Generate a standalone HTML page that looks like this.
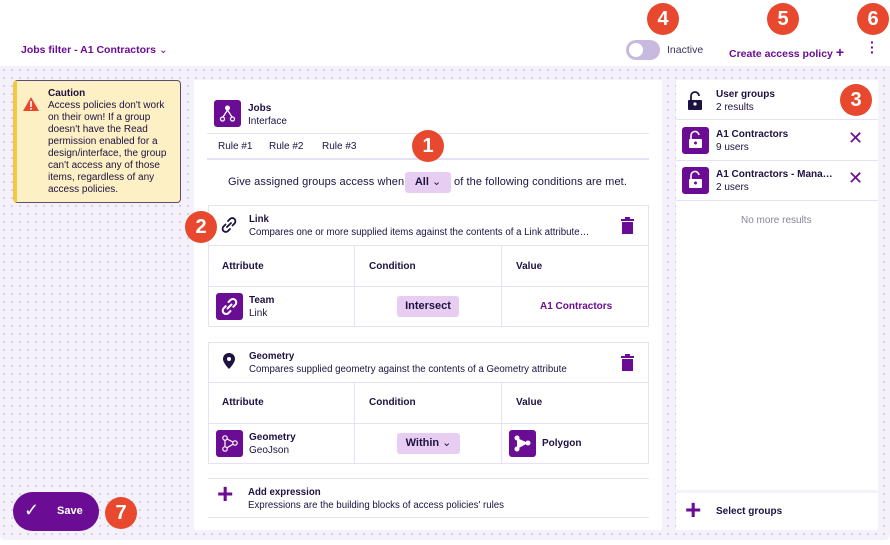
<!DOCTYPE html>
<html><head><meta charset="utf-8"><style>
*{box-sizing:border-box;margin:0;padding:0}
body{width:890px;height:545px;overflow:hidden;font-family:"Liberation Sans",sans-serif;color:#1d1240;background:#fff;position:relative;font-size:11px}
.abs{position:absolute}
.bg{left:0;top:66px;width:890px;height:474px;background-color:#f4f1fb;background-image:radial-gradient(#cfc6e6 0.8px,transparent 1px);background-size:8px 8px;border-radius:0 0 6px 6px}
.badge{position:absolute;width:32px;height:32px;border-radius:50%;background:#e8492e;color:#fff;font-weight:bold;font-size:20px;text-align:center;line-height:32px}
.b{font-weight:bold}
.purple{color:#6b0d94}
.sq{position:absolute;width:27px;height:27px;background:#6b0d94;border-radius:3px}
.card{position:absolute;border:1px solid #e6e1f5;background:#fff}
.cell{position:absolute;border-right:1px solid #e6e1f5}
.chip{position:absolute;background:#e8cdf3;border-radius:3px;font-weight:bold;font-size:11px;text-align:center;line-height:21px}
.hr{position:absolute;height:1px;background:#e6e1f5}
</style></head><body>
<div class="abs b purple" style="left:21px;top:44px;font-size:10.5px">Jobs filter - A1 Contractors <span style="font-weight:normal">&#8964;</span></div>
<div class="abs" style="left:626px;top:40px;width:34px;height:20px;border-radius:10px;background:#c8b9de"></div>
<div class="abs" style="left:629px;top:43px;width:14px;height:14px;border-radius:50%;background:#fff"></div>
<div class="abs" style="left:667px;top:44px;font-size:10.5px;color:#3a3358">Inactive</div>
<div class="abs b purple" style="left:729px;top:44px;font-size:10.5px">Create access policy <span style="font-size:14px">+</span></div>
<div class="abs b purple" style="left:870px;top:40px;font-size:14px;line-height:5px">·<br>·<br>·</div>
<div class="badge" style="left:647px;top:3px">4</div>
<div class="badge" style="left:767px;top:3px">5</div>
<div class="badge" style="left:857px;top:3px">6</div>

<div class="abs bg"></div>
<div class="abs" style="left:13px;top:80px;width:168px;height:123px;background:#fdf0c4;border:1px solid #5a4e70;border-left:4px solid #f5c842;border-radius:4px"></div>
<svg class="abs" style="left:22px;top:96px" width="18" height="16"><path d="M9 1L17 15H1Z" fill="#e8492e"/><rect x="8.2" y="5" width="1.6" height="6" fill="#fff"/><rect x="8.2" y="12" width="1.6" height="1.6" fill="#fff"/></svg>
<div class="abs" style="left:48px;top:88px;width:130px;font-size:10px;line-height:12px"><b>Caution</b><br>Access policies don't work on their own! If a group doesn't have the Read permission enabled for a design/interface, the group can't access any of those items, regardless of any access policies.</div>

<div class="abs" style="left:194px;top:80px;width:468px;height:450px;background:#fff"></div>
<div class="sq" style="left:214px;top:100px"></div>
<svg class="abs" style="left:214px;top:100px" width="27" height="27"><circle cx="13.5" cy="8" r="2.5" fill="#fff"/><path d="M13.5 10L9 17M13.5 10L18 17" stroke="#fff" stroke-width="1.3"/><circle cx="8.5" cy="19" r="2" fill="none" stroke="#fff" stroke-width="1.3"/><circle cx="18.5" cy="19" r="2" fill="none" stroke="#fff" stroke-width="1.3"/></svg>
<div class="abs" style="left:248px;top:102px;font-size:10px;line-height:13px"><b>Jobs</b><br>Interface</div>
<div class="hr" style="left:207px;top:133px;width:442px"></div>
<div class="abs" style="left:218px;top:141px;font-size:10px">Rule #1</div>
<div class="abs" style="left:269px;top:141px;font-size:10px">Rule #2</div>
<div class="abs" style="left:322px;top:141px;font-size:10px">Rule #3</div>
<div class="hr" style="left:207px;top:158px;width:442px;height:2px"></div>
<div class="badge" style="left:412px;top:130px">1</div>
<div class="abs" style="left:228px;top:176px;font-size:11px;letter-spacing:0.1px">Give assigned groups access when</div>
<div class="chip" style="left:405px;top:172px;width:46px">All <span style="font-weight:normal">&#8964;</span></div>
<div class="abs" style="left:454px;top:176px;font-size:11px;letter-spacing:0.1px">of the following conditions are met.</div>

<div class="card" style="left:208px;top:205px;width:441px;height:122px"></div>
<div class="hr" style="left:208px;top:245px;width:441px"></div>
<div class="hr" style="left:208px;top:286px;width:441px"></div>
<div class="cell" style="left:208px;top:245px;width:147px;height:82px"></div>
<div class="cell" style="left:355px;top:245px;width:147px;height:82px"></div>
<div class="badge" style="left:185px;top:211px">2</div>
<svg class="abs" style="left:220px;top:216px" width="18" height="18"><g fill="none" stroke="#1d1240" stroke-width="1.8" stroke-linecap="round"><path d="M8 5l2-2a3 3 0 0 1 4.5 4.5l-2 2"/><path d="M10 13l-2 2a3 3 0 0 1-4.5-4.5l2-2"/><path d="M7 11l4-4"/></g></svg>
<div class="abs" style="left:249px;top:213px;font-size:9.7px;line-height:13px"><b>Link</b><br>Compares one or more supplied items against the contents of a Link attribute…</div>
<svg class="abs" style="left:621px;top:217px" width="13" height="17"><rect x="0" y="2" width="13" height="2" fill="#6b0d94"/><rect x="4" y="0" width="5" height="2" fill="#6b0d94"/><rect x="1" y="5" width="11" height="12" fill="#6b0d94"/></svg>
<div class="abs b" style="left:222px;top:261px;font-size:10px">Attribute</div>
<div class="abs b" style="left:369px;top:261px;font-size:10px">Condition</div>
<div class="abs b" style="left:516px;top:261px;font-size:10px">Value</div>
<div class="sq" style="left:216px;top:293px"></div>
<svg class="abs" style="left:220px;top:297px" width="19" height="19"><g fill="none" stroke="#fff" stroke-width="2" stroke-linecap="round"><path d="M8.5 5l2-2a3.2 3.2 0 0 1 4.8 4.8l-2 2"/><path d="M10.5 14l-2 2a3.2 3.2 0 0 1-4.8-4.8l2-2"/><path d="M7.5 11.5l4-4"/></g></svg>
<div class="abs" style="left:249px;top:294px;font-size:10px;line-height:13px"><b>Team</b><br>Link</div>
<div class="chip" style="left:397px;top:296px;width:62px">Intersect</div>
<div class="abs b purple" style="left:540px;top:301px;font-size:10px">A1 Contractors</div>

<div class="card" style="left:208px;top:342px;width:441px;height:122px"></div>
<div class="hr" style="left:208px;top:382px;width:441px"></div>
<div class="hr" style="left:208px;top:423px;width:441px"></div>
<div class="cell" style="left:208px;top:382px;width:147px;height:82px"></div>
<div class="cell" style="left:355px;top:382px;width:147px;height:82px"></div>
<svg class="abs" style="left:222px;top:352px" width="14" height="18"><path d="M7 1C3.5 1 1 3.5 1 7c0 4 6 10 6 10s6-6 6-10c0-3.5-2.5-6-6-6z" fill="#1d1240"/><circle cx="7" cy="7" r="2" fill="#fff"/></svg>
<div class="abs" style="left:249px;top:350px;font-size:9.7px;line-height:13px"><b>Geometry</b><br>Compares supplied geometry against the contents of a Geometry attribute</div>
<svg class="abs" style="left:621px;top:354px" width="13" height="17"><rect x="0" y="2" width="13" height="2" fill="#6b0d94"/><rect x="4" y="0" width="5" height="2" fill="#6b0d94"/><rect x="1" y="5" width="11" height="12" fill="#6b0d94"/></svg>
<div class="abs b" style="left:222px;top:397px;font-size:10px">Attribute</div>
<div class="abs b" style="left:369px;top:397px;font-size:10px">Condition</div>
<div class="abs b" style="left:516px;top:397px;font-size:10px">Value</div>
<div class="sq" style="left:216px;top:430px"></div>
<svg class="abs" style="left:216px;top:430px" width="27" height="27"><path d="M9 8L9 19L19 13Z" fill="none" stroke="#fff" stroke-width="1.2"/><circle cx="9" cy="8" r="2.2" fill="#6b0d94" stroke="#fff" stroke-width="1.2"/><circle cx="9" cy="19" r="2.2" fill="#6b0d94" stroke="#fff" stroke-width="1.2"/><circle cx="19" cy="13" r="2.2" fill="#6b0d94" stroke="#fff" stroke-width="1.2"/></svg>
<div class="abs" style="left:249px;top:431px;font-size:10px;line-height:13px"><b>Geometry</b><br>GeoJson</div>
<div class="chip" style="left:397px;top:433px;width:63px">Within <span style="font-weight:normal">&#8964;</span></div>
<div class="sq" style="left:509px;top:430px"></div>
<svg class="abs" style="left:509px;top:430px" width="27" height="27"><path d="M8 8L8 19L19 13Z" fill="#fff"/><circle cx="8" cy="8" r="2.5" fill="#fff"/><circle cx="8" cy="19" r="2.5" fill="#fff"/><circle cx="19" cy="13" r="2.5" fill="#fff"/></svg>
<div class="abs b" style="left:542px;top:438px;font-size:10px">Polygon</div>

<div class="hr" style="left:208px;top:478px;width:441px"></div>
<div class="hr" style="left:208px;top:517px;width:441px"></div>
<div class="abs purple b" style="left:217px;top:478px;font-size:28px">+</div>
<div class="abs" style="left:248px;top:486px;font-size:9.7px;line-height:13px"><b>Add expression</b><br>Expressions are the building blocks of access policies' rules</div>

<div class="abs" style="left:676px;top:80px;width:202px;height:450px;background:#fff"></div>
<svg class="abs" style="left:687px;top:91px" width="16" height="20"><path d="M4 9V5a4 4 0 0 1 8 0" fill="none" stroke="#1d1240" stroke-width="1.8"/><rect x="1" y="9" width="14" height="10" rx="1" fill="#1d1240"/><circle cx="8" cy="13" r="1.6" fill="#fff"/></svg>
<div class="abs" style="left:716px;top:88px;font-size:10px;line-height:13px"><b>User groups</b><br>2 results</div>
<div class="badge" style="left:840px;top:84px">3</div>
<div class="hr" style="left:676px;top:119px;width:202px"></div>
<div class="sq" style="left:682px;top:127px"></div>
<svg class="abs" style="left:682px;top:127px" width="27" height="27"><path d="M9 12V9a4 4 0 0 1 8 -1" fill="none" stroke="#fff" stroke-width="1.6"/><rect x="7" y="12" width="13" height="9" rx="1" fill="#fff"/><circle cx="13.5" cy="16" r="1.5" fill="#6b0d94"/></svg>
<div class="abs" style="left:716px;top:128px;font-size:10px;line-height:13px"><b>A1 Contractors</b><br>9 users</div>
<div class="abs" style="left:848px;top:128px;font-size:18px;color:#6b0d94">✕</div>
<div class="hr" style="left:676px;top:160px;width:202px"></div>
<div class="sq" style="left:682px;top:167px"></div>
<svg class="abs" style="left:682px;top:167px" width="27" height="27"><path d="M9 12V9a4 4 0 0 1 8 -1" fill="none" stroke="#fff" stroke-width="1.6"/><rect x="7" y="12" width="13" height="9" rx="1" fill="#fff"/><circle cx="13.5" cy="16" r="1.5" fill="#6b0d94"/></svg>
<div class="abs" style="left:716px;top:168px;font-size:10px;line-height:13px"><b>A1 Contractors - Mana…</b><br>2 users</div>
<div class="abs" style="left:848px;top:168px;font-size:18px;color:#6b0d94">✕</div>
<div class="hr" style="left:676px;top:200px;width:202px"></div>
<div class="abs" style="left:741px;top:215px;font-size:10px;color:#8a8499">No more results</div>
<div class="abs" style="left:676px;top:490px;width:202px;height:3px;background:#f4f1fb"></div>
<div class="abs purple b" style="left:685px;top:494px;font-size:28px">+</div>
<div class="abs b" style="left:716px;top:506px;font-size:10px">Select groups</div>

<div class="abs" style="left:13px;top:492px;width:86px;height:39px;border-radius:20px;background:#6b0d94"></div>
<div class="abs" style="left:24px;top:500px;color:#fff;font-size:18px">✓</div>
<div class="abs b" style="left:57px;top:505px;color:#fff;font-size:11px">Save</div>
<div class="badge" style="left:105px;top:497px">7</div>
</body></html>
